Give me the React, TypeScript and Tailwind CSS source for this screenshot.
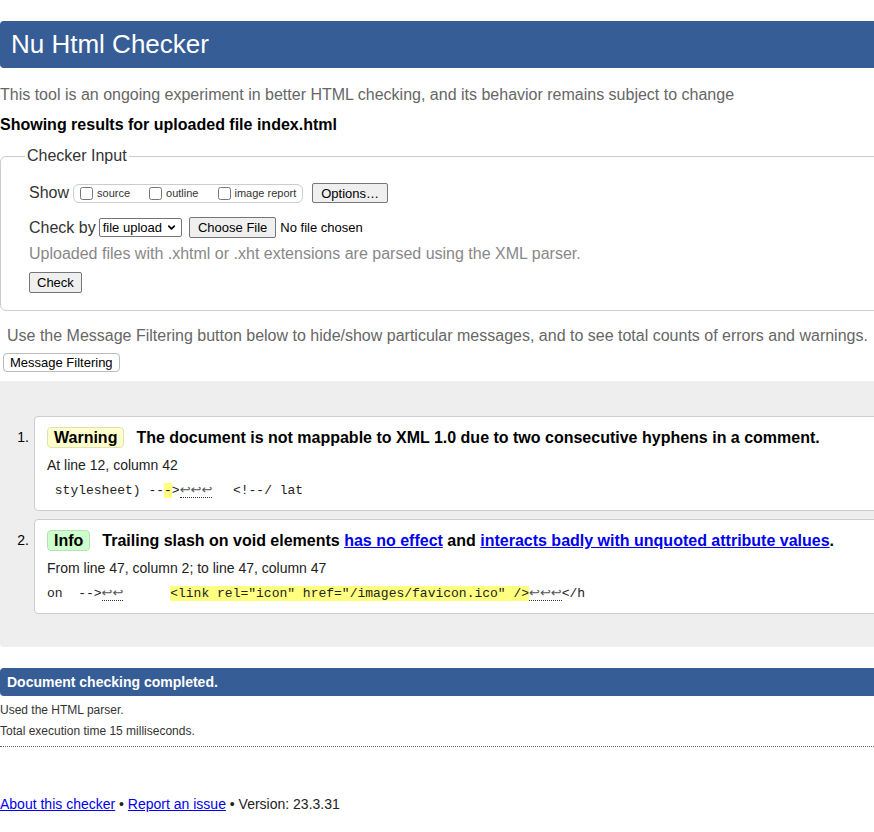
import { ChevronDown } from 'lucide-react';

const Returns = ({ n }: { n: number }) => (
  <span className="font-['DejaVu_Sans',sans-serif] text-[#555] border-b border-dotted border-[#333]">
    {'↩'.repeat(n)}
  </span>
);

const Badge = ({ kind }: { kind: 'Warning' | 'Info' }) => (
  <span
    className={`inline-flex h-[21px] items-center rounded-[4px] border px-[6px] font-bold text-[16px] leading-[19px] ${
      kind === 'Warning' ? 'bg-[#ffffcc] border-[#e2e2b0]' : 'bg-[#ccffcc] border-[#b8e0b8]'
    }`}
  >
    {kind}
  </span>
);

const Btn = ({ children, className = '' }: { children: React.ReactNode; className?: string }) => (
  <button
    className={`bg-[#efefef] border border-[#767676] rounded-[2px] px-[7px] text-[13px] leading-[15px] text-black ${className}`}
  >
    {children}
  </button>
);

export default function App() {
  return (
    <div className="min-h-[832px] overflow-hidden bg-white pt-[21px] font-['Liberation_Sans',Arial,sans-serif] text-black">
      <h1 className="h-[47px] rounded-l-[4px] bg-[#365d95] pl-[11px] text-[26px] leading-[47px] text-white">
        Nu Html Checker
      </h1>

      <p className="mt-[18px] text-[16px] leading-[18px] text-[#666]">
        This tool is an ongoing experiment in better HTML checking, and its behavior remains subject to change
      </p>
      <p className="mt-[12px] text-[16px] font-bold leading-[18px]">Showing results for uploaded file index.html</p>

      <fieldset className="mt-[13px] mr-[-10px] rounded-l-[6px] border border-[#ccc] pl-[28px] pb-[16px]">
        <legend className="ml-[-4px] px-[2px] text-[16px] leading-[18px] text-[#333]">Checker Input</legend>

        <div className="mt-[18px] flex h-[20px] items-center text-[#333]">
          <span className="text-[16px] leading-[18px]">Show</span>
          <div className="ml-[4px] flex h-[19px] items-center rounded-[6px] border border-[#ccc] px-[6px] text-[11px]">
            <label className="flex items-center">
              <input type="checkbox" className="m-0 h-[13px] w-[13px]" />
              <span className="ml-[4px]">source</span>
            </label>
            <label className="ml-[19px] flex items-center">
              <input type="checkbox" className="m-0 h-[13px] w-[13px]" />
              <span className="ml-[4px]">outline</span>
            </label>
            <label className="ml-[20px] flex items-center">
              <input type="checkbox" className="m-0 h-[13px] w-[13px]" />
              <span className="ml-[3px]">image report</span>
            </label>
          </div>
          <Btn className="ml-[9px] h-[20px] px-[8px]">Options…</Btn>
        </div>

        <div className="mt-[14px] flex h-[21px] items-center text-[#333]">
          <span className="text-[16px] leading-[18px]">Check by</span>
          <div className="ml-[3px] flex h-[19px] items-center gap-[4px] rounded-[2px] border border-[#767676] pl-[3px] pr-[4px] text-[13px] text-black">
            file upload
            <ChevronDown size={11} strokeWidth={3.5} />
          </div>
          <Btn className="ml-[7px] h-[21px] px-[8px]">Choose File</Btn>
          <span className="ml-[4px] text-[13px] text-black">No file chosen</span>
        </div>

        <p className="mt-[7px] text-[16px] leading-[18px] text-[#888]">
          Uploaded files with .xhtml or .xht extensions are parsed using the XML parser.
        </p>
        <Btn className="mt-[9px] h-[21px]">Check</Btn>
      </fieldset>

      <p className="mt-[16px] pl-[7px] text-[16px] leading-[18px] text-[#666] whitespace-nowrap">
        Use the Message Filtering button below to hide/show particular messages, and to see total counts of errors and warnings.
      </p>
      <button className="mt-[8px] ml-[3px] block h-[19px] rounded-[4px] border border-[#bbb] bg-white px-[6px] text-[13px] leading-[15px] text-black">
        Message Filtering
      </button>

      <div className="mt-[9px] rounded-bl-[4px] bg-[#eeeeee] pt-[35px] pb-[33px]">
        <ol className="flex flex-col gap-[8px]">
          <li className="flex">
            <span className="w-[34px] shrink-0 pr-[5px] pt-[13px] text-right text-[14px] leading-[16px]">1.</span>
            <div className="mr-[-10px] grow rounded-l-[4px] border border-[#ccc] bg-white pl-[12px] pt-[10px] pb-[11px]">
              <div className="flex items-center">
                <Badge kind="Warning" />
                <span className="ml-[12px] text-[16px] font-bold leading-[19px]">
                  The document is not mappable to XML 1.0 due to two consecutive hyphens in a comment.
                </span>
              </div>
              <p className="mt-[9px] text-[14px] leading-[16px] text-[#222]">At line 12, column 42</p>
              <p className="mt-[8px] whitespace-pre font-['Liberation_Mono',monospace] text-[13px] leading-[17px] text-[#222]">
                {' stylesheet) --'}
                <span className="bg-[#ffff80]">-</span>
                {'>'}
                <Returns n={3} />
                <span className="pl-[5px]">{'  <!--/ lat'}</span>
              </p>
            </div>
          </li>

          <li className="flex">
            <span className="w-[34px] shrink-0 pr-[5px] pt-[13px] text-right text-[14px] leading-[16px]">2.</span>
            <div className="mr-[-10px] grow rounded-l-[4px] border border-[#ccc] bg-white pl-[12px] pt-[10px] pb-[11px]">
              <div className="flex items-center">
                <Badge kind="Info" />
                <span className="ml-[12px] text-[16px] font-bold leading-[19px]">
                  Trailing slash on void elements{' '}
                  <a href="#" className="text-[#0000ee] underline">has no effect</a> and{' '}
                  <a href="#" className="text-[#0000ee] underline">interacts badly with unquoted attribute values</a>.
                </span>
              </div>
              <p className="mt-[9px] text-[14px] leading-[16px] text-[#222]">From line 47, column 2; to line 47, column 47</p>
              <p className="mt-[8px] whitespace-pre font-['Liberation_Mono',monospace] text-[13px] leading-[17px] text-[#222]">
                {'on  -->'}
                <Returns n={2} />
                {'      '}
                <span className="bg-[#ffff80]">{'<link rel="icon" href="/images/favicon.ico" />'}</span>
                <Returns n={3} />
                {'</h'}
              </p>
            </div>
          </li>
        </ol>
      </div>

      <div className="mt-[21px] h-[28px] rounded-l-[4px] bg-[#365d95] pl-[7px] text-[14px] font-bold leading-[28px] text-white">
        Document checking completed.
      </div>
      <p className="mt-[7px] text-[12px] leading-[14px] text-[#333]">Used the HTML parser.</p>
      <p className="mt-[7px] text-[12px] leading-[14px] text-[#333]">Total execution time 15 milliseconds.</p>
      <div className="mt-[8px] border-t border-dotted border-[#666]" />

      <p className="mt-[49px] text-[14px] leading-[16px] text-[#222]">
        <a href="#" className="text-[#0000ee] underline">About this checker</a> •{' '}
        <a href="#" className="text-[#0000ee] underline">Report an issue</a> • Version: 23.3.31
      </p>
    </div>
  );
}
